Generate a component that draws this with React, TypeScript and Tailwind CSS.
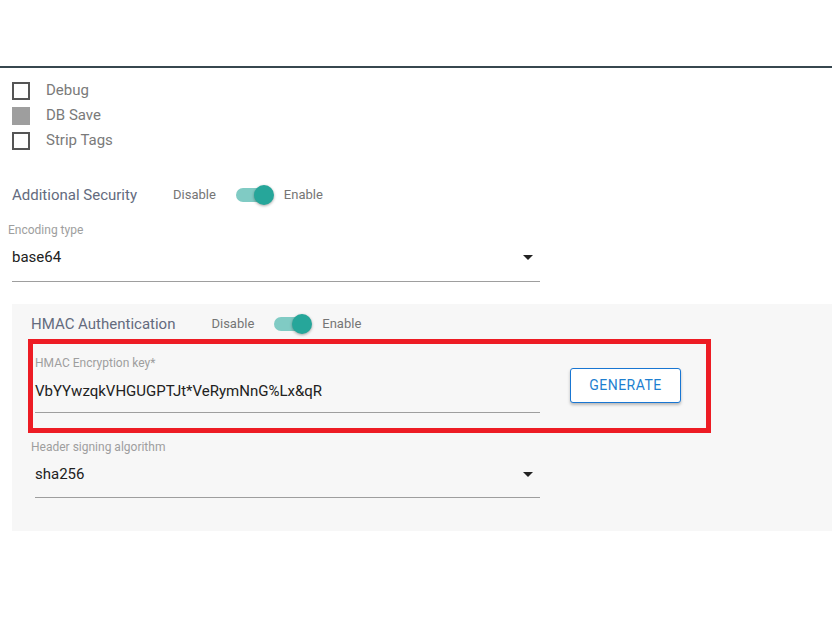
import React from "react";

const font = { fontFamily: "Roboto, 'Liberation Sans', sans-serif" };

function Toggle() {
  return (
    <div className="relative w-[36px] h-[14px] rounded-full bg-[#80cbc4]">
      <div className="absolute right-[-2px] top-[-3px] w-5 h-5 rounded-full bg-[#26a69a] shadow-[0_1px_3px_rgba(0,0,0,0.35)]" />
    </div>
  );
}

function Arrow() {
  return (
    <svg width="10" height="5" viewBox="0 0 10 5" className="block">
      <path d="M0 0 L10 0 L5 5 Z" fill="#222" />
    </svg>
  );
}

function Checkbox({ label, filled }: { label: string; filled?: boolean }) {
  return (
    <div className="flex items-center h-[25px]">
      {filled ? (
        <div className="w-[18px] h-[18px] bg-[#9e9e9e]" />
      ) : (
        <div className="w-[18px] h-[18px] border-2 border-[#555]" />
      )}
      <span className="ml-[16px] text-[15px] text-[#7a7a7a]">{label}</span>
    </div>
  );
}

export default function App() {
  return (
    <div className="w-[832px] h-[619px] bg-white overflow-hidden" style={font}>
      <div className="h-[66px]" />
      <div className="h-[2px] bg-[#37474f]" />
      <div className="pl-[12px] pt-[10px]">
        <Checkbox label="Debug" />
        <Checkbox label="DB Save" filled />
        <Checkbox label="Strip Tags" />
      </div>
      <div className="flex items-center h-[24px] mt-[30px] pl-[12px]">
        <span className="text-[15px] text-[#646b7e]">Additional Security</span>
        <span className="ml-[36px] text-[13px] text-[#757575]">Disable</span>
        <div className="ml-[20px]">
          <Toggle />
        </div>
        <span className="ml-[12px] text-[13px] text-[#757575]">Enable</span>
      </div>
      <div className="mt-[16px] w-[540px]">
        <div className="pl-[8px] text-[12px] leading-[14px] text-[#9e9e9e]">Encoding type</div>
        <div className="ml-[12px] mt-[10px] flex items-center justify-between pr-[7px] h-[20px]">
          <span className="text-[15px] text-[#212121]">base64</span>
          <Arrow />
        </div>
        <div className="ml-[12px] mt-[14px] h-px bg-[#9e9e9e]" />
      </div>
      <div className="ml-[12px] mt-[22px] h-[227px] bg-[#f7f7f7] pt-[9px]">
        <div className="flex items-center h-[22px] pl-[19px]">
          <span className="text-[15px] text-[#646b7e]">HMAC Authentication</span>
          <span className="ml-[36px] text-[13px] text-[#757575]">Disable</span>
          <div className="ml-[20px]">
            <Toggle />
          </div>
          <span className="ml-[12px] text-[13px] text-[#757575]">Enable</span>
        </div>
        <div className="ml-[16px] mt-[4px] w-[683px] h-[94px] border-[5px] border-[#ed1c24] flex">
          <div className="w-[507px] pl-[2px] pt-[12px]">
            <div className="text-[12px] leading-[14px] text-[#9e9e9e]">HMAC Encryption key*</div>
            <div className="mt-[11px] h-[20px] flex items-center text-[15px] text-[#212121]">
              VbYYwzqkVHGUGPTJt*VeRymNnG%Lx&amp;qR
            </div>
            <div className="mt-[11px] h-px bg-[#9e9e9e]" />
          </div>
          <div className="ml-[30px] mt-[24px]">
            <button className="w-[111px] h-[35px] rounded-[3px] border border-[#1976d2] bg-white text-[14px] tracking-[0.5px] text-[#1e7fd0] shadow-[0_2px_3px_rgba(0,0,0,0.25)]">
              GENERATE
            </button>
          </div>
        </div>
        <div className="w-[528px]">
          <div className="ml-[19px] mt-[7px] text-[12px] leading-[14px] text-[#9e9e9e]">Header signing algorithm</div>
          <div className="ml-[23px] mt-[10px] flex items-center justify-between pr-[7px] h-[20px]">
            <span className="text-[15px] text-[#212121]">sha256</span>
            <Arrow />
          </div>
          <div className="ml-[23px] mt-[13px] h-px bg-[#9e9e9e]" />
        </div>
      </div>
    </div>
  );
}
